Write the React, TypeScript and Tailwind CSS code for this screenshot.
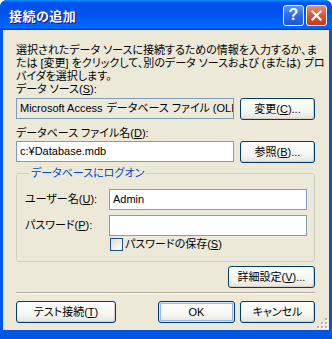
import type { ReactNode } from 'react'

const ui = "font-['Liberation_Sans','Noto_Sans_CJK_JP',sans-serif] [font-feature-settings:'palt'] text-[11px] leading-[13px] text-black"

export default function App() {
  return (
    <div className={`w-[332px] h-[339px] flex flex-col bg-[#0055E5] rounded-t-[7px] overflow-hidden ${ui}`}>
      <TitleBar />
      <div className="relative flex-1 mx-[3px] mb-[9px] bg-[#ECE9D8] flex flex-col pl-[13px] pr-[14px] pt-[14px]">
        <div className="whitespace-nowrap">
          <div>選択されたデータ ソースに接続するための情報を入力するか、ま</div>
          <div>たは [変更] をクリックして、別のデータ ソースおよび (または) プロ</div>
          <div>バイダを選択します。</div>
          <div>データ ソース(<u>S</u>):</div>
        </div>

        <div className="flex gap-[6px] mt-[2px]">
          <div className="flex-1 min-w-0 h-[21px] border border-[#7F9DB9] bg-[#EBEADB] flex items-center px-[3px] whitespace-nowrap overflow-hidden">
            Microsoft Access<span className="ml-[4px]">データベース ファイル (OLE DB)</span>
          </div>
          <Btn className="w-[75px]">変更(<u>C</u>)...</Btn>
        </div>

        <div className="mt-[7px]">データベース ファイル名(<u>D</u>):</div>
        <div className="flex gap-[6px] mt-[1px]">
          <div className="flex-1 min-w-0 h-[21px] border border-[#7F9DB9] bg-white flex items-center px-[3px]">
            c:¥Database.mdb
          </div>
          <Btn className="w-[75px]">参照(<u>B</u>)...</Btn>
        </div>

        <fieldset className="mt-[4px] border border-[#D0D0BF] rounded-[3px] pl-[8px] pr-[7px] pb-[10px]">
          <legend className="ml-[4px] px-[2px] text-[#0046D5]">データベースにログオン</legend>
          <div className="flex items-center h-[21px] mt-[9px]">
            <div className="w-[84px]">ユーザー名(<u>U</u>):</div>
            <div className="flex-1 min-w-0 h-[21px] border border-[#7F9DB9] bg-white flex items-center px-[3px]">Admin</div>
          </div>
          <div className="flex items-center h-[21px] mt-[5px]">
            <div className="w-[84px]">パスワード(<u>P</u>):</div>
            <div className="flex-1 min-w-0 h-[21px] border border-[#7F9DB9] bg-white" />
          </div>
          <div className="flex items-center mt-[2px] pl-[85px] gap-[2px]">
            <div className="w-[13px] h-[13px] border border-[#1C5180] bg-[linear-gradient(135deg,#DCDCD7,#FFFFFF)]" />
            <div>パスワードの保存(<u>S</u>)</div>
          </div>
        </fieldset>

        <div className="flex justify-end mt-[4px]">
          <Btn className="w-[87px]">詳細設定(<u>V</u>)...</Btn>
        </div>

        <div className="mt-[4px] border-t border-t-[#ACA899] border-b border-b-white" />

        <div className="flex mt-[7px]">
          <Btn className="w-[100px]">テスト接続(<u>T</u>)</Btn>
          <div className="flex-1" />
          <Btn className="w-[77px]" def>OK</Btn>
          <Btn className="w-[75px] ml-[5px]">キャンセル</Btn>
        </div>

        <Gripper />
      </div>
    </div>
  )
}

function TitleBar() {
  return (
    <div className="h-[30px] flex items-center pl-[9px] pr-[5px] bg-[linear-gradient(180deg,#0997ff,#0053ee_8%,#0050ee_40%,#0066ff_88%,#0066ff_93%,#005bff_95%,#003dd7_96%,#003dd7)]">
      <div className="flex-1 text-white font-bold text-[13px] tracking-[0.5px] [text-shadow:1px_1px_#0F1089] font-['Noto_Sans_CJK_JP',sans-serif]">
        接続の追加
      </div>
      <div className="w-[21px] h-[21px] rounded-[3px] border border-white bg-[linear-gradient(180deg,#5A95F8,#2D6BE8_50%,#1F56D6)] flex items-center justify-center text-white font-bold text-[16px] leading-none font-['Liberation_Sans',sans-serif]">
        ?
      </div>
      <div className="ml-[2px] w-[21px] h-[21px] rounded-[3px] border border-white bg-[linear-gradient(180deg,#F08B6B,#E0522F_50%,#C7391A)] flex items-center justify-center">
        <svg width="11" height="11" viewBox="0 0 11 11">
          <path d="M1.5 1.5 L9.5 9.5 M9.5 1.5 L1.5 9.5" stroke="white" strokeWidth="2.2" strokeLinecap="square" />
        </svg>
      </div>
    </div>
  )
}

function Btn({ children, className, def }: { children: ReactNode; className?: string; def?: boolean }) {
  return (
    <div
      className={`h-[22px] shrink-0 flex items-center justify-center rounded-[3px] border border-[#003C74] bg-[linear-gradient(180deg,#FFFFFF,#F4F4F0_70%,#E3E2DA)] whitespace-nowrap ${
        def ? 'shadow-[inset_0_0_0_1px_#CEE7FF,inset_0_0_0_2px_#98B8EA]' : 'shadow-[inset_-1px_-1px_0_#D6D0C5]'
      } ${className ?? ''}`}
    >
      {children}
    </div>
  )
}

function Gripper() {
  return (
    <svg className="absolute right-[1px] bottom-[1px]" width="11" height="11" viewBox="0 0 11 11">
      {[
        [8, 0], [4, 4], [8, 4], [0, 8], [4, 8], [8, 8],
      ].map(([x, y], i) => (
        <g key={i}>
          <rect x={x + 1} y={y + 1} width="2" height="2" fill="#FFFFFF" />
          <rect x={x} y={y} width="2" height="2" fill="#B9B6A6" />
        </g>
      ))}
    </svg>
  )
}
